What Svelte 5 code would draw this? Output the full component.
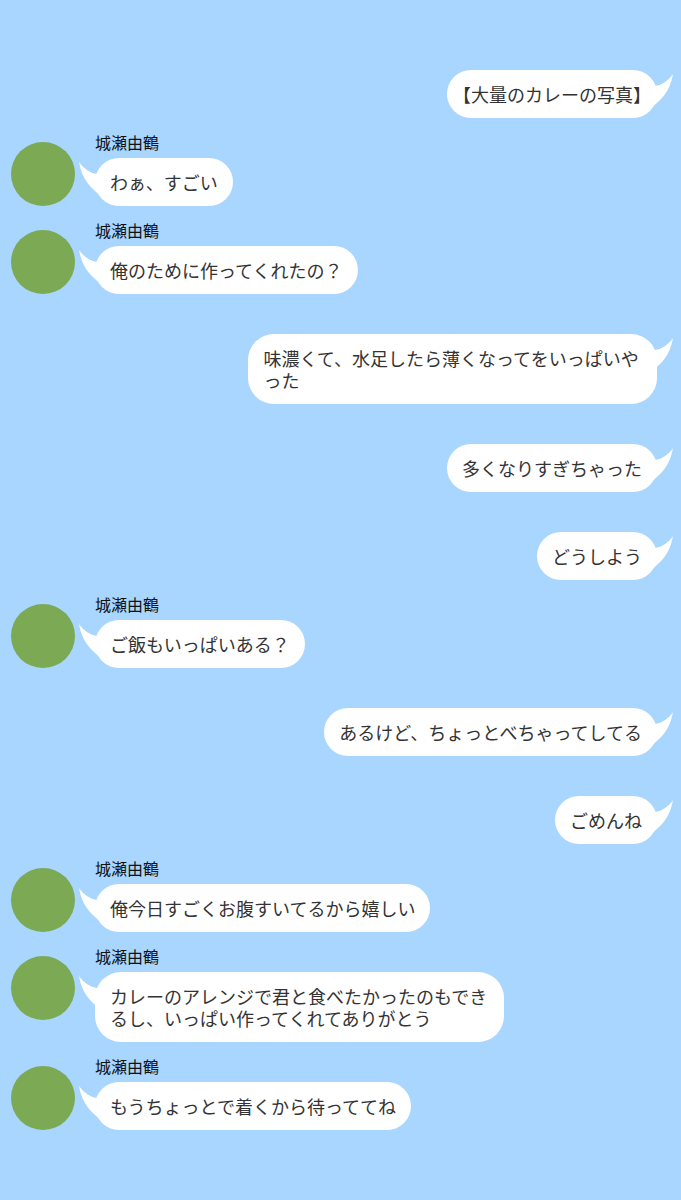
<script>
  const sender = '城瀬由鶴';

  const messages = [
    { mine: true, photo: true, text: '【大量のカレーの写真】' },
    { mine: false, text: 'わぁ、すごい' },
    { mine: false, text: '俺のために作ってくれたの？' },
    { mine: true, text: '味濃くて、水足したら薄くなってをいっぱいやった' },
    { mine: true, text: '多くなりすぎちゃった' },
    { mine: true, text: 'どうしよう' },
    { mine: false, text: 'ご飯もいっぱいある？' },
    { mine: true, text: 'あるけど、ちょっとべちゃってしてる' },
    { mine: true, text: 'ごめんね' },
    { mine: false, text: '俺今日すごくお腹すいてるから嬉しい' },
    { mine: false, text: 'カレーのアレンジで君と食べたかったのもできるし、いっぱい作ってくれてありがとう' },
    { mine: false, text: 'もうちょっとで着くから待っててね' }
  ];
</script>

<main class="chat" lang="ja">
  {#each messages as msg}
    <div class="message" class:mine={msg.mine}>
      {#if !msg.mine}
        <div class="avatar"></div>
      {/if}
      <div class="body">
        {#if !msg.mine}
          <div class="name">{sender}</div>
        {/if}
        <div class="bubble">
          <svg class="tail" viewBox="0 0 24 36" aria-hidden="true">
            <path d="M0 1 C5 8 11 12 18 13 L24 22 L22 35 C12 27 3 19 0 1 Z" />
          </svg>
          <p class:photo={msg.photo}>{msg.text}</p>
        </div>
      </div>
    </div>
  {/each}
</main>

<style>
  :global(body) { margin: 0; background: #a8d6ff; }

  .chat { box-sizing: border-box; min-height: 100vh; padding: 30px 24px 70px 11px;
          background: #a8d6ff; font-family: 'Noto Sans CJK JP', sans-serif; }

  .message { display: flex; align-items: flex-start; gap: 20px; }
  .mine { justify-content: flex-end; padding-top: 40px; }

  .avatar { flex: none; width: 64px; height: 64px; margin-top: 24px;
            border-radius: 50%; background: #7ca953; }

  .body { display: flex; flex-direction: column; align-items: flex-start; }
  .name { margin: 12px 0 4px; font-size: 16px; line-height: 24px; color: #111; }

  .bubble { position: relative; box-sizing: border-box; max-width: 60vw;
            padding: 13px 15px; border-radius: 26px; background: #fff; }
  .bubble p { margin: 0; font-size: 18px; line-height: 22px; color: #333;
              line-break: anywhere; }
  /* half-width brackets */
  .bubble .photo { font-feature-settings: 'halt'; }

  /* points left, mirrored for own messages */
  .tail { position: absolute; top: 3px; left: -16px; width: 24px; height: 36px; fill: #fff; }
  .mine .tail { left: auto; right: -16px; transform: scaleX(-1); }
</style>
